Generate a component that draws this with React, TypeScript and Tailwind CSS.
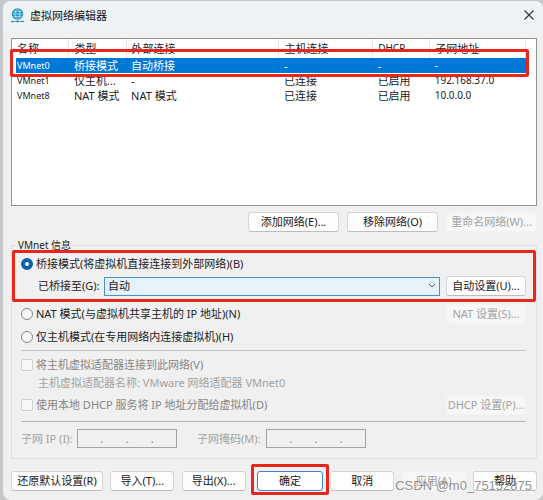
import React from 'react';

const networks = [
  { name: 'VMnet0', type: '桥接模式', external: '自动桥接', host: '-', dhcp: '-', subnet: '-' },
  { name: 'VMnet1', type: '仅主机...', external: '-', host: '已连接', dhcp: '已启用', subnet: '192.168.37.0' },
  { name: 'VMnet8', type: 'NAT 模式', external: 'NAT 模式', host: '已连接', dhcp: '已启用', subnet: '10.0.0.0' },
];

const columns = [
  { label: '名称', width: 'w-[10.4%]' },
  { label: '类型', width: 'w-[11.2%]' },
  { label: '外部连接', width: 'w-[30%]' },
  { label: '主机连接', width: 'w-[18.4%]' },
  { label: 'DHCP', width: 'w-[11.2%]' },
  { label: '子网地址', width: 'w-[18.8%]' },
];

type ButtonProps = {
  children: React.ReactNode;
  className: string;
  disabled?: boolean;
  primary?: boolean;
};

const Button: React.FC<ButtonProps> = ({ children, className, disabled, primary }) => {
  let look = 'border-[#d4d4d4] border-b-[#bdbdbd] bg-[#fdfdfd] text-[#1a1a1a]';
  if (disabled) look = 'border-[#f3f3f3] bg-[#f7f7f7] text-[#a2a2a2]';
  if (primary) look = 'border-[#3f86c8] bg-[#fdfdfd] text-[#1a1a1a]';
  return (
    <button
      type="button"
      disabled={disabled}
      className={`flex h-5 items-center justify-center whitespace-nowrap rounded-[3px] border ${look} ${className}`}
    >
      {children}
    </button>
  );
};

// Red marker frame drawn over the part of the dialog to look at
const Highlight: React.FC<{ className: string }> = ({ className }) => (
  <div className={`pointer-events-none absolute z-10 rounded-[2px] border-3 border-[#e8261c] ${className}`} />
);

const IpInput: React.FC<{ id: string }> = ({ id }) => (
  <div className="flex h-[19px] w-[100px] items-center border border-[#a3a3a3] text-[#777]">
    {[1, 2, 3, 4].map((part) => (
      <React.Fragment key={part}>
        {part > 1 && <span>.</span>}
        <input
          id={part === 1 ? id : undefined}
          aria-label={part === 1 ? undefined : `${id}-${part}`}
          disabled
          className="h-full min-w-0 flex-1 bg-transparent"
        />
      </React.Fragment>
    ))}
  </div>
);

const GlobeIcon: React.FC = () => (
  <svg width="13" height="15" viewBox="0 0 13 15" fill="none" aria-hidden="true">
    <circle cx="6.5" cy="6" r="5.8" fill="#2496c2" />
    <g stroke="#cdeaf5" strokeWidth="0.7">
      <ellipse cx="6.5" cy="6" rx="2.4" ry="4.6" />
      <path d="M2.6 3.6h7.8M1.6 6h9.8M2.6 8.5h7.8" />
    </g>
    <path d="M0.5 13.5h12M6.5 11.5v2" stroke="#2496c2" strokeWidth="0.8" />
    <path d="M0.5 13.5h2M5.5 13.5h2M10.5 13.5h2" stroke="#1f80aa" strokeWidth="1.6" />
  </svg>
);

const TitleBar: React.FC = () => (
  <header className="flex h-[29px] items-center bg-[#eef3f8] pl-2 pr-[7px]">
    <GlobeIcon />
    <h1 className="ml-1.5 flex-1 text-[#111]">虚拟网络编辑器</h1>
    <button type="button" aria-label="关闭" className="-mt-0.5 p-0.5">
      <svg width="10" height="10" viewBox="0 0 10 10" stroke="#333" strokeWidth="1.1" aria-hidden="true">
        <path d="M0.5 0.5l9 9M9.5 0.5l-9 9" />
      </svg>
    </button>
  </header>
);

const NetworkTable: React.FC = () => (
  <div className="relative h-[168px] border border-[#929292] bg-white pl-1 pr-2.5">
    <table className="w-full table-fixed border-collapse whitespace-nowrap text-left leading-[15px] text-[#222]">
      <thead>
        <tr className="h-[19px]">
          {columns.map((col, i) => (
            <th
              key={col.label}
              className={`border-r border-[#e6e6e6] p-0 font-normal ${i === 0 ? 'pl-px' : 'pl-[5px]'} ${col.label === 'DHCP' ? 'text-[10px]' : ''} ${col.width}`}
            >
              {col.label}
            </th>
          ))}
        </tr>
      </thead>
      <tbody>
        {networks.map((net, i) => (
          <tr key={net.name} className={`h-[15px] ${i === 0 ? 'bg-[#0078d7] text-white' : ''}`}>
            <td className="p-0 pl-px text-[9px]">{net.name}</td>
            <td className="p-0 pl-[5px]">{net.type}</td>
            <td className="p-0 pl-[5px]">{net.external}</td>
            <td className="p-0 pl-[5px]">{net.host}</td>
            <td className="p-0 pl-[5px]">{net.dhcp}</td>
            <td className="p-0 pl-[5px] text-[10px]">{net.subnet}</td>
          </tr>
        ))}
      </tbody>
    </table>
    <Highlight className="-left-0.5 right-[7px] top-2.5 h-[28px]" />
  </div>
);

const radioClass =
  'size-3 shrink-0 appearance-none rounded-full border border-[#858585] bg-[#f7f7f7] checked:border-4 checked:border-[#0a5fb0] checked:bg-white';
const checkClass = 'size-3 shrink-0 appearance-none rounded-[2px] border border-[#cfcfcf] bg-[#f8f8f8]';

const NetworkInfo: React.FC = () => (
  <fieldset className="relative mt-[13px] h-[214px] rounded-[2px] border border-[#dedede] pl-[9px] pr-2.5">
    <legend className="absolute -top-2 left-1 bg-[#f0f0f0] px-0.5 text-[10px] leading-[14px]">VMnet 信息</legend>

    <div className="pt-2">
      <label className="flex h-5 items-center gap-[3px]">
        <input type="radio" name="mode" defaultChecked className={radioClass} />
        桥接模式(将虚拟机直接连接到外部网络)(B)
      </label>
      <div className="mt-0.5 flex h-5 items-center pl-[17px]">
        <label htmlFor="bridge" className="w-[66px] shrink-0">已桥接至(G):</label>
        <div className="relative min-w-0 flex-1">
          <select
            id="bridge"
            className="block h-[19px] w-full appearance-none border border-[#4a90d0] bg-[#e5f1fb] pl-[3px] text-[#222]"
          >
            <option>自动</option>
          </select>
          <svg
            className="pointer-events-none absolute right-1 top-1.5"
            width="8"
            height="6"
            viewBox="0 0 8 6"
            fill="none"
            stroke="#555"
            aria-hidden="true"
          >
            <path d="M1 1l3 3 3-3" />
          </svg>
        </div>
        <Button className="ml-1.5 w-20">自动设置(U)...</Button>
      </div>
    </div>
    <Highlight className="left-0 right-0 top-1 h-[52px]" />

    <div className="mt-2 flex h-5 items-center justify-between">
      <label className="flex items-center gap-[3px]">
        <input type="radio" name="mode" className={radioClass} />
        NAT 模式(与虚拟机共享主机的 IP 地址)(N)
      </label>
      <Button disabled className="w-20">NAT 设置(S)...</Button>
    </div>
    <label className="mt-[3px] flex h-5 items-center gap-[3px]">
      <input type="radio" name="mode" className={radioClass} />
      仅主机模式(在专用网络内连接虚拟机)(H)
    </label>

    <div className="mt-[3px] border-t border-[#c4c4c4] text-[#858585]">
      <label className="mt-1 flex h-5 items-center gap-[3px]">
        <input type="checkbox" disabled className={checkClass} />
        将主机虚拟适配器连接到此网络(V)
      </label>
      <p className="h-4 pl-[17px] leading-4 text-[#a2a2a2]">主机虚拟适配器名称: VMware 网络适配器 VMnet0</p>
      <div className="mt-1 flex h-5 items-center justify-between">
        <label className="flex items-center gap-[3px]">
          <input type="checkbox" disabled className={checkClass} />
          使用本地 DHCP 服务将 IP 地址分配给虚拟机(D)
        </label>
        <Button disabled className="w-20">DHCP 设置(P)...</Button>
      </div>
    </div>

    <div className="mt-1.5 flex items-center border-t border-[#b5b5b5] pt-[7px] text-[#a2a2a2]">
      <label htmlFor="subnet-ip" className="w-14">子网 IP (I):</label>
      <IpInput id="subnet-ip" />
      <label htmlFor="subnet-mask" className="ml-5 w-[69px]">子网掩码(M):</label>
      <IpInput id="subnet-mask" />
    </div>
  </fieldset>
);

const App: React.FC = () => {
  return (
    <div className="relative bg-[#c6c7ca] pl-[3px] pt-px font-['Noto_Sans','Noto_Sans_CJK_SC',sans-serif] text-[11px] leading-4 text-[#222]">
      <main className="overflow-hidden rounded-lg bg-[#f0f0f0]">
        <TitleBar />
        <div className="pb-[9px] pl-2 pr-1.5 pt-2">
          <NetworkTable />

          <div className="mt-1.5 flex justify-end gap-2">
            <Button className="w-[91px]">添加网络(E)...</Button>
            <Button className="w-[91px]">移除网络(O)</Button>
            <Button disabled className="w-[91px]">重命名网络(W)...</Button>
          </div>

          <NetworkInfo />

          <div className="mt-3 flex justify-between">
            <Button className="w-[92px]">还原默认设置(R)</Button>
            <Button className="w-16">导入(T)...</Button>
            <Button className="w-16">导出(X)...</Button>
            <div className="relative ml-1">
              <Button primary className="w-[66px]">确定</Button>
              <Highlight className="-inset-x-1.5 -top-[7px] h-[31px]" />
            </div>
            <Button className="w-16">取消</Button>
            <Button disabled className="w-16">应用(A)</Button>
            <Button className="w-16">帮助</Button>
          </div>
        </div>
      </main>
      <span className="absolute bottom-1.5 right-[11px] font-['Liberation_Sans',sans-serif] text-[13px] text-[#858585]/90">
        CSDN @m0_75152875
      </span>
    </div>
  );
};

export default App;
